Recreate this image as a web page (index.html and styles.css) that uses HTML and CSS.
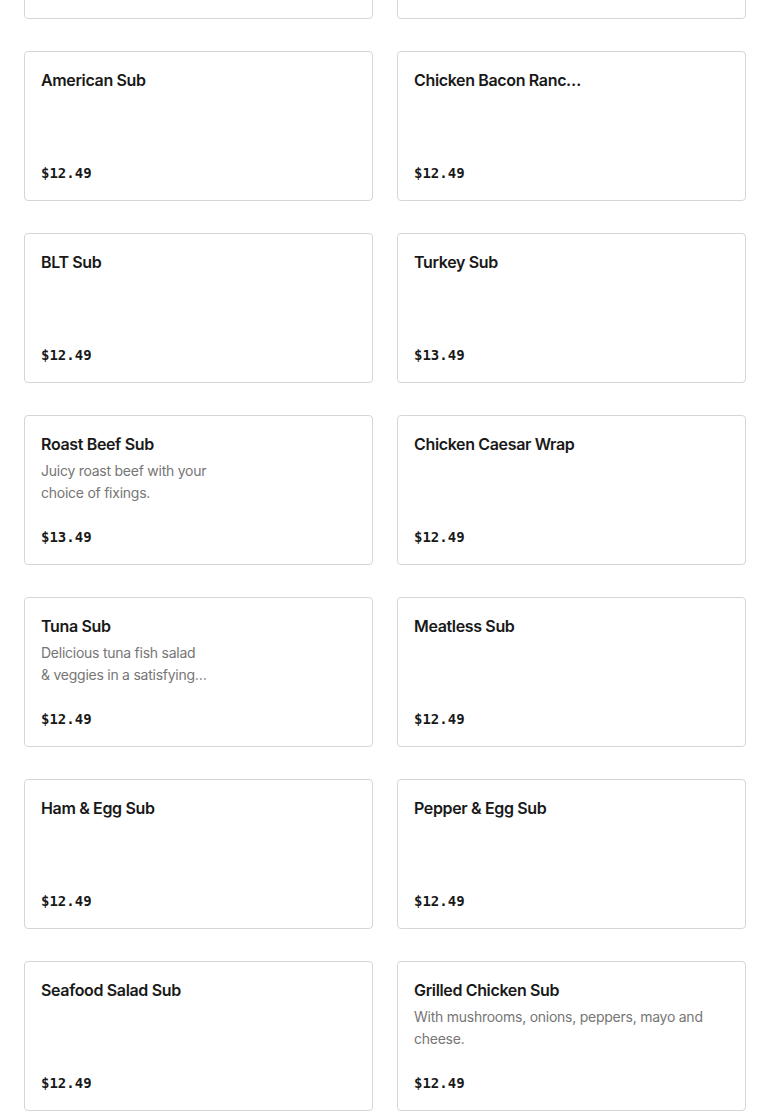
FILE: index.html
```html
<!DOCTYPE html>
<html lang="en">
<head>
    <meta charset="UTF-8">
    <meta name="viewport" content="width=device-width, initial-scale=1.0">
    <title>Subs Menu</title>
    <link rel="stylesheet" href="styles.css">
</head>
<body>
    <div class="menu-grid">
        <!-- row scrolled above the fold -->
        <div class="item-card"></div>
        <div class="item-card"></div>

        <div class="item-card">
            <div class="item-info">
                <h3 class="item-name">American Sub</h3>
            </div>
            <span class="item-price">$12.49</span>
        </div>
        <div class="item-card">
            <div class="item-info narrow">
                <h3 class="item-name">Chicken Bacon Ranch Sub</h3>
            </div>
            <span class="item-price">$12.49</span>
        </div>

        <div class="item-card">
            <div class="item-info">
                <h3 class="item-name">BLT Sub</h3>
            </div>
            <span class="item-price">$12.49</span>
        </div>
        <div class="item-card">
            <div class="item-info">
                <h3 class="item-name">Turkey Sub</h3>
            </div>
            <span class="item-price">$13.49</span>
        </div>

        <div class="item-card">
            <div class="item-info narrow">
                <h3 class="item-name">Roast Beef Sub</h3>
                <p class="item-desc">Juicy roast beef with your choice of fixings.</p>
            </div>
            <span class="item-price">$13.49</span>
        </div>
        <div class="item-card">
            <div class="item-info">
                <h3 class="item-name">Chicken Caesar Wrap</h3>
            </div>
            <span class="item-price">$12.49</span>
        </div>

        <div class="item-card">
            <div class="item-info narrow">
                <h3 class="item-name">Tuna Sub</h3>
                <p class="item-desc">Delicious tuna fish salad &amp;&nbsp;veggies in a satisfying sub roll.</p>
            </div>
            <span class="item-price">$12.49</span>
        </div>
        <div class="item-card">
            <div class="item-info">
                <h3 class="item-name">Meatless Sub</h3>
            </div>
            <span class="item-price">$12.49</span>
        </div>

        <div class="item-card">
            <div class="item-info">
                <h3 class="item-name">Ham &amp; Egg Sub</h3>
            </div>
            <span class="item-price">$12.49</span>
        </div>
        <div class="item-card">
            <div class="item-info">
                <h3 class="item-name">Pepper &amp; Egg Sub</h3>
            </div>
            <span class="item-price">$12.49</span>
        </div>

        <div class="item-card">
            <div class="item-info">
                <h3 class="item-name">Seafood Salad Sub</h3>
            </div>
            <span class="item-price">$12.49</span>
        </div>
        <div class="item-card">
            <div class="item-info">
                <h3 class="item-name">Grilled Chicken Sub</h3>
                <p class="item-desc">With mushrooms, onions, peppers, mayo and cheese.</p>
            </div>
            <span class="item-price">$12.49</span>
        </div>
    </div>
</body>
</html>
```

FILE: styles.css
```css
body {
    margin: 0;
    font-family: Inter, "Liberation Sans", sans-serif;
    background: #ffffff;
    color: #191919;
    overflow: hidden;
}
.menu-grid {
    display: grid;
    grid-template-columns: 1fr 1fr;
    column-gap: 24px;
    row-gap: 32px;
    padding: 0 24px;
    margin-top: -131px;
}
.item-card {
    box-sizing: border-box;
    height: 150px;
    border: 1px solid #d6d6d6;
    border-radius: 4px;
    padding: 16px;
    display: flex;
    flex-direction: column;
}
.item-info {
    min-width: 0;
}
.item-info.narrow {
    width: 170px;
}
.item-name {
    margin: 0;
    font-size: 16px;
    line-height: 24px;
    font-weight: 600;
    letter-spacing: -0.35px;
    color: #191919;
    white-space: nowrap;
    overflow: hidden;
    text-overflow: ellipsis;
}
.item-desc {
    margin: 4px 0 0;
    font-size: 14px;
    line-height: 22px;
    letter-spacing: -0.25px;
    color: #767676;
    display: -webkit-box;
    -webkit-line-clamp: 2;
    -webkit-box-orient: vertical;
    overflow: hidden;
}
.item-price {
    margin-top: auto;
    margin-bottom: 1px;
    font-family: "DejaVu Sans Mono", "Liberation Mono", monospace;
    font-weight: bold;
    font-size: 14px;
    line-height: 20px;
    color: #191919;
}
```
